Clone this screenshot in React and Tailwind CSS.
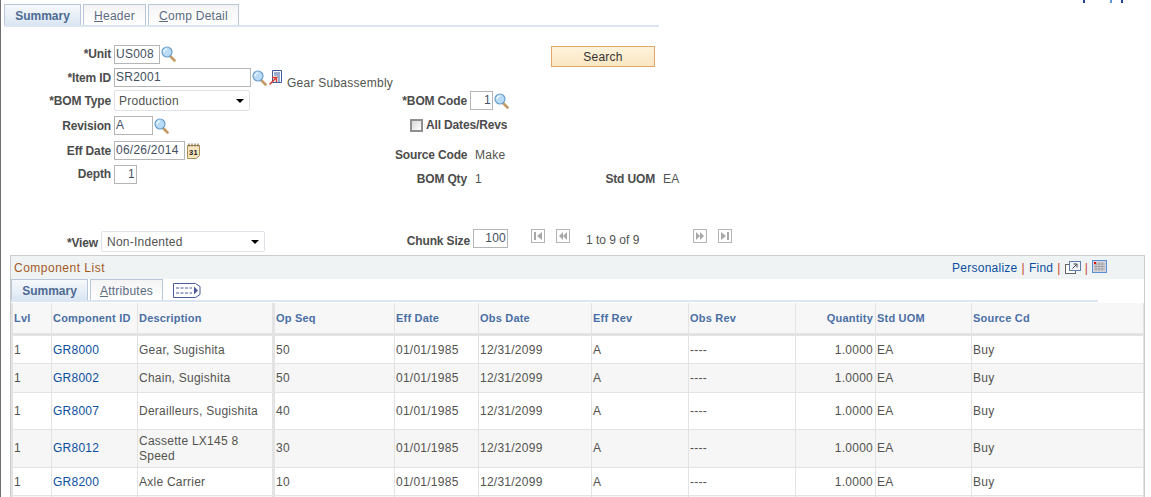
const rows = [
  { id: "GR8000", desc: "Gear, Sugishita", op: "50", h: "h-[28px]", pad: "pt-[2px] " },
  { id: "GR8002", desc: "Chain, Sugishita", op: "50", h: "h-[29px]", pad: "", alt: true },
  { id: "GR8007", desc: "Derailleurs, Sugishita", op: "40", h: "h-[37px]", pad: "" },
  { id: "GR8012", desc: "Cassette LX145 8 Speed", op: "30", h: "h-[38px]", pad: "", alt: true },
  { id: "GR8200", desc: "Axle Carrier", op: "10", h: "h-[28px]", pad: "pt-[1px] " },
];

const headers = [
  ["Lvl", "w-[41px]"],
  ["Component ID", "w-[86px]"],
  ["Description", "w-[137px]"],
  ["Op Seq", "w-[120px]"],
  ["Eff Date", "w-[84px]"],
  ["Obs Date", "w-[113px]"],
  ["Eff Rev", "w-[97px]"],
  ["Obs Rev", "w-[107px]"],
  ["Quantity", "w-[80px] text-right"],
  ["Std UOM", "w-[96px]"],
  ["Source Cd", "w-[172px]"],
];

function Lens() {
  return (
    <svg width="15" height="16" viewBox="0 0 15 16" className="shrink-0 ml-[1px]">
      <path d="M9.500 10.500l4 4" stroke="#c39a63" strokeWidth="2.600" strokeLinecap="round" />
      <circle cx="6" cy="6" r="5" fill="#b9dcf6" stroke="#6c9fc9" strokeWidth="1.200" />
      <path d="M3 6a3 3 0 0 1 3-3" stroke="#fff" strokeWidth="1.200" fill="none" />
    </svg>
  );
}

function Detail() {
  return (
    <svg width="13" height="15" viewBox="0 0 13 15" className="shrink-0">
      <path d="M3.500.5h9v12h-9z" fill="#fff" stroke="#3f5a9e" />
      <path d="M5 3h6M5 5h6M8 7h3M9 9h2M9 11h2" stroke="#3f5a9e" />
      <path d="M.5 14.500L6.500 8.500M3 7.500h4.500V12" stroke="#d63a2e" strokeWidth="1.500" fill="none" />
    </svg>
  );
}

function Calendar() {
  return (
    <svg width="13" height="16" viewBox="0 0 13 16" className="shrink-0">
      <path d="M.5 2.500h12v10l-3 3h-9z" fill="#f6e6c0" stroke="#a98d55" />
      <path d="M2 .5v3M5 .5v3M8 .5v3M11 .5v3" stroke="#6b5a35" />
      <text x="2" y="11.500" fontSize="7.500" fontWeight="700" fontFamily="Liberation Sans" fill="#222">31</text>
    </svg>
  );
}

function Pager({ d, bar }) {
  return (
    <svg width="14" height="14" viewBox="0 0 14 14" className="shrink-0">
      <rect x=".5" y=".5" width="13" height="13" fill="#fff" stroke="#b4b4b4" />
      <path d={d} fill="#a8a8a8" />
      {bar && <rect x={bar} y="3" width="2" height="8" fill="#a8a8a8" />}
    </svg>
  );
}

function Caret() {
  return <span className="w-0 h-0 border-x-[4px] border-x-transparent border-t-[4px] border-t-black" />;
}

function Select({ value, className }) {
  return (
    <div className={"flex items-center justify-between h-[21px] pl-[4px] pr-[5px] bg-white border border-[#dfe3e8] rounded-[2px] " + className}>
      <span>{value}</span>
      <Caret />
    </div>
  );
}

function Input({ value, className }) {
  return (
    <div className={"h-[19px] leading-[17px] px-[1px] bg-white border border-[#b5b5b5] text-[#44505f] " + className}>
      {value}
    </div>
  );
}

function Label({ children, className }) {
  return <div className={"font-bold text-[#4c4c4c] text-right whitespace-nowrap tracking-[-0.15px] " + className}>{children}</div>;
}

function FormRow({ h, label, children }) {
  return (
    <div className={"flex items-center " + h}>
      <Label className="w-[110px] mr-[3px]">{label}</Label>
      {children}
    </div>
  );
}

function Tab({ active, children, className }) {
  return (
    <div
      className={
        "flex items-center justify-center h-[21px] pt-[1px] border border-b-0 border-[#b9c7da] " +
        (active
          ? "font-bold tracking-normal text-[#4d6a92] bg-linear-to-b from-[#f6f9fc] to-[#dbe6f3] "
          : "text-[#5c6b80] bg-linear-to-b from-[#f4f4f4] to-white ") +
        className
      }
    >
      {children}
    </div>
  );
}

export default function App() {
  const cell = "pl-[1px] pr-[2px] py-0 border-b border-b-[#e3e3e3] border-r border-r-[#e3e3e3] leading-[15px] ";

  return (
    <div className="relative h-[497px] overflow-hidden bg-white border-l border-l-[#6e6e6e] text-[12px] tracking-[0.25px] text-[#53534f] font-['Liberation_Sans',Arial,sans-serif]">
      {/* stray marks at the top edge */}
      <div className="absolute top-0 left-[1082px] flex">
        <span className="w-[2px] h-[3px] bg-[#1f3f8f]" />
        <span className="w-[2px] h-[3px] ml-[25px] bg-[#5a9bd5]" />
        <span className="w-[2px] h-[3px] ml-[9px] bg-[#1f3f8f]" />
      </div>

      {/* PAGE TABS */}
      <div className="pt-[4px] pl-[3px]">
        <div className="flex gap-[2px]">
          <Tab active className="w-[77px]">Summary</Tab>
          <Tab className="w-[63px]"><span><u>H</u>eader</span></Tab>
          <Tab className="w-[91px]"><span><u>C</u>omp Detail</span></Tab>
        </div>
        <div className="w-[655px] h-[2px] bg-[#dce6f3]" />
      </div>

      {/* SEARCH FORM */}
      <div className="flex pt-[15px] h-[186px]">
        <div className="w-[394px] shrink-0">
          <FormRow h="h-[24px]" label="*Unit">
            <Input value="US008" className="w-[46px]" />
            <Lens />
          </FormRow>
          <FormRow h="h-[23px]" label="*Item ID">
            <Input value="SR2001" className="w-[137px]" />
            <Lens />
            <span className="ml-[2px]"><Detail /></span>
            <span className="ml-[5px] mt-[11px]">Gear Subassembly</span>
          </FormRow>
          <FormRow h="h-[23px]" label="*BOM Type">
            <Select value="Production" className="w-[136px]" />
          </FormRow>
          <FormRow h="h-[27px]" label="Revision">
            <Input value="A" className="w-[39px]" />
            <Lens />
          </FormRow>
          <FormRow h="h-[23px]" label="Eff Date">
            <Input value="06/26/2014" className="w-[71px]" />
            <span className="ml-[2px]"><Calendar /></span>
          </FormRow>
          <FormRow h="h-[24px]" label="Depth">
            <Input value="1" className="w-[23px] text-right" />
          </FormRow>
        </div>

        <div className="flex-1">
          <div className="h-[47px] pt-[4px] pl-[156px]">
            <div className="flex items-center justify-center w-[104px] h-[21px] border border-[#dfa66b] bg-linear-to-b from-[#fdf3dc] to-[#fbe6c2] text-[#333]">
              Search
            </div>
          </div>
          <div className="flex items-center h-[23px]">
            <Label className="w-[72px] mr-[3px]">*BOM Code</Label>
            <Input value="1" className="w-[23px] text-right" />
            <Lens />
          </div>
          <div className="flex items-center h-[26px] pl-[15px]">
            <span className="w-[13px] h-[13px] mr-[3px] border-2 border-[#8f8f8f] bg-linear-to-br from-[#d8d8d8] to-white" />
            <Label>All Dates/Revs</Label>
          </div>
          <div className="flex items-center h-[24px] mt-[5px]">
            <Label className="w-[72px] mr-[8px]">Source Code</Label>
            <span>Make</span>
          </div>
          <div className="flex items-center h-[23px]">
            <Label className="w-[72px] mr-[8px]">BOM Qty</Label>
            <span className="w-[108px]">1</span>
            <Label className="w-[72px] mr-[8px]">Std UOM</Label>
            <span>EA</span>
          </div>
        </div>
      </div>

      {/* VIEW AND PAGER */}
      <div className="flex items-start mt-[18px] h-[24px]">
        <Label className="w-[97px] mr-[3px] mt-[3px]">*View</Label>
        <Select value="Non-Indented" className="w-[164px] pl-[5px]" />
        <Label className="w-[205px] mr-[3px] mt-[1px]">Chunk Size</Label>
        <Input value="100" className="w-[35px] text-right -mt-[2px]" />
        <div className="ml-[23px] -mt-[2px] flex">
          <Pager d="M11 3v8L6 7z" bar="3" />
          <span className="ml-[11px]"><Pager d="M7 3v8L3 7zM11 3v8L7 7z" /></span>
        </div>
        <span className="ml-[16px] w-[107px] whitespace-nowrap tracking-normal">1 to 9 of 9</span>
        <div className="-mt-[2px] flex">
          <Pager d="M3 3v8l4-4zM7 3v8l4-4z" />
          <span className="ml-[11px]"><Pager d="M3 3v8l5-4z" bar="9" /></span>
        </div>
      </div>

      {/* COMPONENT LIST */}
      <div className="ml-[9px] w-[1135px] border-t border-x border-[#ccc]">
        <div className="flex items-center justify-between h-[23px] px-[3px] bg-[#f0f3f4]">
          <span className="text-[#a2591e] tracking-[0.5px]">Component List</span>
          <div className="flex items-center mr-[34px] text-[#0b4fa0]">
            <span>Personalize</span>
            <span className="mx-[4px] text-[#c8442c]">|</span>
            <span>Find</span>
            <span className="mx-[4px] text-[#c8442c]">|</span>
            <svg width="16" height="14" viewBox="0 0 16 14">
              <rect x=".5" y="3.500" width="10" height="9" fill="#fff" stroke="#666" />
              <rect x="4.500" y=".5" width="11" height="9" fill="#eef3f8" stroke="#5f7ea8" />
              <path d="M7.500 7.500l4-4M8.500 3h3.500v3.500" stroke="#444" fill="none" />
            </svg>
            <span className="mx-[4px] text-[#c8442c]">|</span>
            <svg width="15" height="13" viewBox="0 0 15 13" className="-mt-[3px]">
              <rect x=".5" y=".5" width="14" height="12" fill="#d4d4d8" stroke="#5b8fd6" />
              <path d="M2 4h11M2 6.500h11M2 9h11M4 2v9M7 2v9M10 2v9" stroke="#9a9aa0" strokeWidth=".8" />
              <rect x="2" y="2" width="2" height="2" fill="#e01010" />
            </svg>
          </div>
        </div>

        <div className="flex items-end h-[21px]">
          <Tab active className="w-[77px]">Summary</Tab>
          <Tab className="w-[73px] ml-[2px]"><span><u>A</u>ttributes</span></Tab>
          <svg width="28" height="15" viewBox="0 0 28 15" className="ml-[10px] mb-[2px]">
            <path d="M.5.5h22l4.500 3v8l-4.500 3H.5z" fill="#fff" stroke="#4a5a9a" />
            <path d="M3 5h16M3 10h16" stroke="#4a5a9a" strokeDasharray="3 1.500" />
            <path d="M21 3.500v8l4-4z" fill="#4a5a9a" />
          </svg>
        </div>
        <div className="w-[1087px] h-[2px] bg-[#dce6f3]" />

        <table className="mt-[1px] table-fixed border-separate border-spacing-0 w-[1133px]">
          <thead>
            <tr className="h-[33px] bg-[#f7f7f7]">
              {headers.map(([title, cls], i) => (
                <th
                  key={title}
                  className={
                    "pl-[1px] pr-[2px] font-bold text-[11px] tracking-[0.2px] text-[#4a6fa5] text-left border-b-[3px] border-b-[#e3e3e3] border-r border-r-[#e3e3e3] " +
                    (i === 0 ? "border-l-2 border-l-[#e3e3e3] " : "") +
                    (i === 2 ? "border-r-[3px] " : "") +
                    cls
                  }
                >
                  {title}
                </th>
              ))}
            </tr>
          </thead>
          <tbody>
            {rows.map((r) => {
              const c = cell + r.pad;
              return (
                <tr key={r.id} className={r.h + (r.alt ? " bg-[#f6f6f6]" : " bg-white")}>
                  <td className={c + "border-l-2 border-l-[#e3e3e3]"}>1</td>
                  <td className={c + "text-[#0b4fa0]"}>{r.id}</td>
                  <td className={c + "border-r-[3px]"}>{r.desc}</td>
                  <td className={c}>{r.op}</td>
                  <td className={c}>01/01/1985</td>
                  <td className={c}>12/31/2099</td>
                  <td className={c}>A</td>
                  <td className={c}>----</td>
                  <td className={c + "text-right"}>1.0000</td>
                  <td className={c}>EA</td>
                  <td className={c}>Buy</td>
                </tr>
              );
            })}
            {/* next row is only just on screen, its text falls below the fold */}
            <tr className="h-[28px] bg-[#f6f6f6]">
              {headers.map(([title], i) => (
                <td
                  key={title}
                  className={cell + (i === 0 ? "border-l-2 border-l-[#e3e3e3] " : "") + (i === 2 ? "border-r-[3px]" : "")}
                />
              ))}
            </tr>
          </tbody>
        </table>
      </div>
    </div>
  );
}
